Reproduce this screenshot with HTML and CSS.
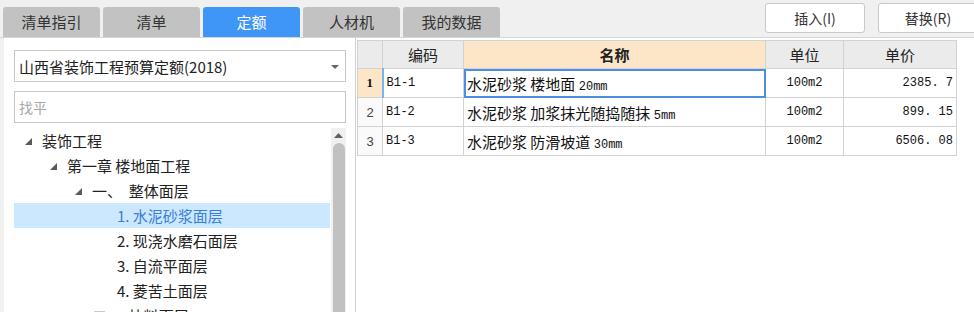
FILE: index.html
```html
<!DOCTYPE html>
<html>
<head>
  <title>定额</title>
  <meta name="viewport" content="width=device-width, initial-scale=1.0">
  <link rel="stylesheet" href="styles.css">
</head>
<body>
  <div class="topbar">
    <div class="tabs">
      <div class="tab">清单指引</div>
      <div class="tab">清单</div>
      <div class="tab active">定额</div>
      <div class="tab">人材机</div>
      <div class="tab">我的数据</div>
    </div>
    <div class="actions">
      <button class="btn">插入(I)</button>
      <button class="btn">替换(R)</button>
    </div>
  </div>

  <div class="main">
    <aside class="side">
      <div class="select">
        <span>山西省装饰工程预算定额(2018)</span>
        <svg class="caret" width="8" height="4" viewBox="0 0 8 4"><polygon points="0,0 8,0 4,4" fill="#666"/></svg>
      </div>
      <div class="search">找平</div>

      <div class="tree-wrap">
        <ul class="tree">
          <li class="node lv0"><svg class="tri" width="7" height="7" viewBox="0 0 7 7"><polygon points="7,0 7,7 0,7" fill="#5a5a5a"/></svg>装饰工程</li>
          <li class="node lv1"><svg class="tri" width="7" height="7" viewBox="0 0 7 7"><polygon points="7,0 7,7 0,7" fill="#5a5a5a"/></svg>第一章 楼地面工程</li>
          <li class="node lv2"><svg class="tri" width="7" height="7" viewBox="0 0 7 7"><polygon points="7,0 7,7 0,7" fill="#5a5a5a"/></svg>一、&nbsp;&nbsp;整体面层</li>
          <li class="node lv3 selected">1. 水泥砂浆面层</li>
          <li class="node lv3">2. 现浇水磨石面层</li>
          <li class="node lv3">3. 自流平面层</li>
          <li class="node lv3">4. 菱苦土面层</li>
          <li class="node lv2"><svg class="tri" width="7" height="7" viewBox="0 0 7 7"><polygon points="7,0 7,7 0,7" fill="#5a5a5a"/></svg>二、&nbsp;&nbsp;块料面层</li>
        </ul>
        <div class="scrollbar">
          <div class="arrow"><svg width="9" height="5" viewBox="0 0 9 5"><polygon points="4.5,0 9,5 0,5" fill="#606060"/></svg></div>
          <div class="thumb"></div>
        </div>
      </div>
    </aside>

    <section class="grid">
      <table>
        <colgroup>
          <col style="width:25px">
          <col style="width:81px">
          <col style="width:302px">
          <col style="width:78px">
          <col style="width:113px">
        </colgroup>
        <thead>
          <tr>
            <th></th>
            <th>编码</th>
            <th class="cur">名称</th>
            <th>单位</th>
            <th>单价</th>
          </tr>
        </thead>
        <tbody>
          <tr class="current">
            <td class="num">1</td>
            <td class="code">B1-1</td>
            <td class="name focus">水泥砂浆 楼地面 <span class="mono">20mm</span></td>
            <td class="unit">100m2</td>
            <td class="price">2385. 7</td>
          </tr>
          <tr>
            <td class="num">2</td>
            <td class="code">B1-2</td>
            <td class="name">水泥砂浆 加浆抹光随捣随抹 <span class="mono">5mm</span></td>
            <td class="unit">100m2</td>
            <td class="price">899. 15</td>
          </tr>
          <tr>
            <td class="num">3</td>
            <td class="code">B1-3</td>
            <td class="name">水泥砂浆 防滑坡道 <span class="mono">30mm</span></td>
            <td class="unit">100m2</td>
            <td class="price">6506. 08</td>
          </tr>
        </tbody>
      </table>
    </section>
  </div>
</body>
</html>
```

FILE: styles.css
```css
body {
  margin: 0;
  background: #f0f0f0;
  font-family: "Noto Sans CJK SC", "Noto Sans", sans-serif;
  color: #222;
  overflow: hidden;
}

.topbar {
  height: 37px;
  display: flex;
  justify-content: space-between;
  border-bottom: 1px solid #d6d6d6;
}

.tabs {
  display: flex;
  align-items: flex-end;
  gap: 3px;
  padding-left: 3px;
}

.tab {
  width: 97px;
  height: 30px;
  line-height: 30px;
  text-align: center;
  font-size: 15px;
  background: #c2c2c2;
  color: #333;
  border-radius: 3px 3px 0 0;
}

.tab.active {
  background: #3f96f6;
  color: #fff;
}

.actions {
  display: flex;
  gap: 13px;
  padding-top: 3px;
  margin-right: -4px;
}

.btn {
  width: 100px;
  height: 30px;
  background: #fff;
  border: 1px solid #c8c8c8;
  border-radius: 3px;
  font-family: inherit;
  font-size: 14px;
  color: #333;
  padding: 0;
}

.main {
  display: flex;
  height: 274px;
  margin-left: 4px;
  background: #fff;
}

.side {
  width: 332px;
  padding: 12px 9px 0 10px;
  border-right: 1px solid #d0d0d0;
  display: flex;
  flex-direction: column;
}

.select {
  width: 332px;
  height: 32px;
  box-sizing: border-box;
  border: 1px solid #c8c8c8;
  display: flex;
  align-items: center;
  justify-content: space-between;
  padding: 0 6px 0 4px;
  font-size: 15px;
  color: #222;
}

.caret {
  margin-top: 1px;
}

.search {
  margin-top: 9px;
  width: 332px;
  height: 32px;
  box-sizing: border-box;
  border: 1px solid #c8c8c8;
  padding-left: 4px;
  line-height: 30px;
  font-size: 14px;
  color: #a8a8a8;
}

.tree-wrap {
  margin-top: 5px;
  width: 332px;
  flex: 1;
  display: flex;
  overflow: hidden;
}

.tree {
  list-style: none;
  margin: 0;
  padding: 0;
  flex: 1;
}

.node {
  height: 25px;
  line-height: 25px;
  font-size: 15px;
  white-space: nowrap;
  color: #222;
  display: flex;
  align-items: center;
}

.tri {
  margin-right: 10px;
  margin-top: 2px;
}

.lv0 { padding-left: 11px; }
.lv1 { padding-left: 36px; }
.lv2 { padding-left: 61px; }
.lv3 { padding-left: 103px; }

.node.selected {
  background: #cce8ff;
  color: #3a7fd5;
}

.scrollbar {
  width: 15px;
  margin-left: 1px;
  background: #f0f0f0;
  display: flex;
  flex-direction: column;
  align-items: center;
}

.arrow {
  height: 14px;
  display: flex;
  align-items: center;
  justify-content: center;
}

.thumb {
  margin-top: 1px;
  width: 12px;
  flex: 1;
  background: #c1c1c1;
  border-radius: 6px 6px 0 0;
}

.grid {
  flex: 1;
  padding: 2px 0 0 1px;
}

table {
  border-collapse: collapse;
  table-layout: fixed;
  width: 599px;
  font-size: 15px;
}

th, td {
  border: 1px solid #d2d2d2;
  padding: 0 3px;
  white-space: nowrap;
  overflow: hidden;
}

th {
  height: 27px;
  background: #ebebeb;
  font-weight: normal;
  color: #222;
}

th.cur {
  background: #fde6c8;
  font-weight: bold;
}

td {
  height: 28px;
  color: #111;
}

.num {
  text-align: center;
  background: #fafafa;
  font-family: "Liberation Sans", sans-serif;
  font-size: 13px;
  color: #444;
}

.current .num {
  background: #fde6c8;
  font-family: "Liberation Serif", serif;
  font-weight: bold;
  color: #111;
}

.code, .unit, .price, .mono {
  font-family: "Liberation Mono", monospace;
  font-size: 12px;
}

.current .code {
  border-left: 2px solid #7ab2ee;
}

.unit {
  text-align: center;
}

.price {
  text-align: right;
}

.name.focus {
  outline: 2px solid #4a8fe0;
  outline-offset: -2px;
}
```
